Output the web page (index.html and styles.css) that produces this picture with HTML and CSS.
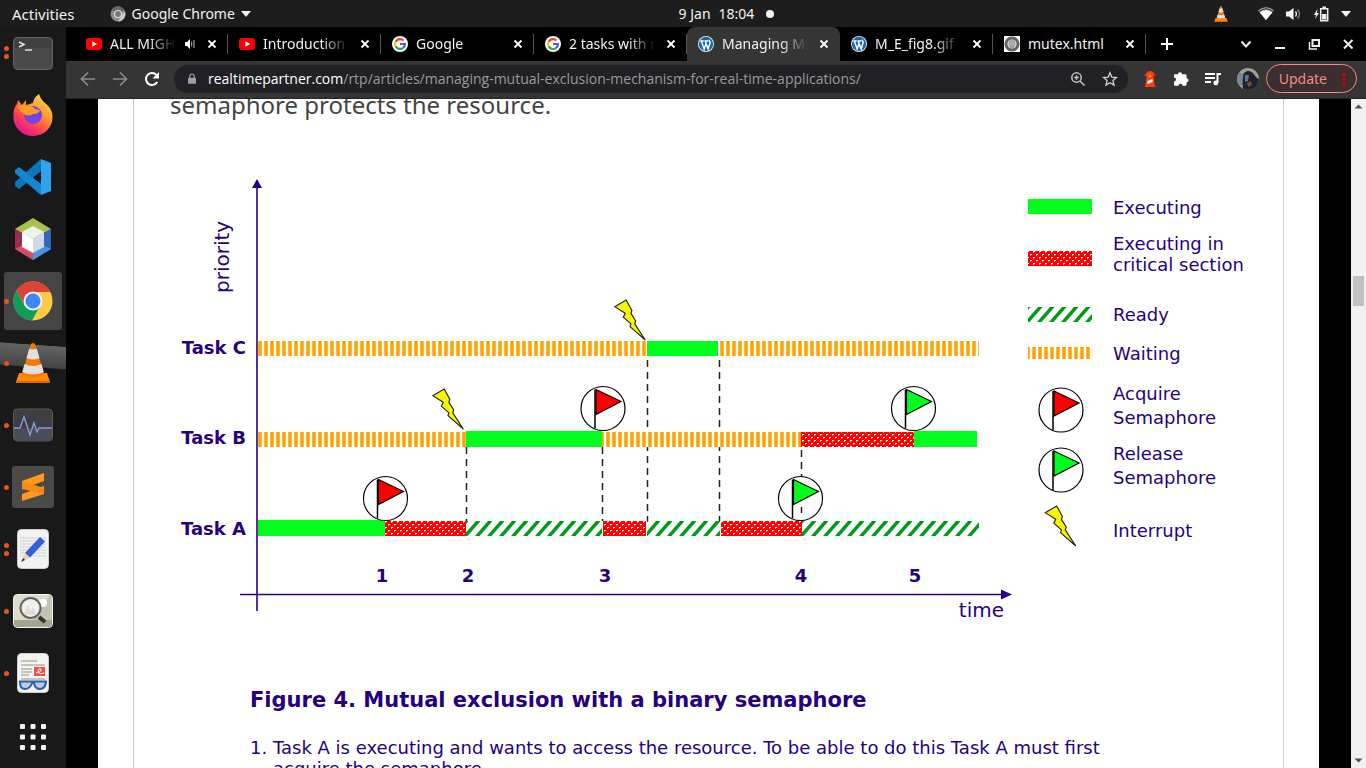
FILE: index.html
```html
<!DOCTYPE html>
<html lang="en">
<head>
<meta charset="utf-8">
<title>Managing Mutual Exclusion</title>
<link rel="stylesheet" href="styles.css">
</head>
<body>
<svg class="sprite" aria-hidden="true">
  <symbol id="youtube" viewBox="0 0 16 16"><rect x="0" y="2" width="16" height="12" rx="3" fill="#f00"/><path d="M6.3 5.3 11 8l-4.700 2.700z" fill="#fff"/></symbol>
  <symbol id="google" viewBox="0 0 16 16"><circle cx="8" cy="8" r="8" fill="#fff"/><g fill="none" stroke-width="2.200"><path d="M11.600 4.600A5 5 0 0 0 3.600 5.700" stroke="#ea4335"/><path d="M3.700 5.500a5 5 0 0 0 0 5" stroke="#fbbc05"/><path d="M3.600 10.400a5 5 0 0 0 7.700 1.300" stroke="#34a853"/><path d="M8 8h5a5 5 0 0 1-1.800 3.800" stroke="#4a5cf5"/></g></symbol>
  <symbol id="wordpress" viewBox="0 0 16 16"><circle cx="8" cy="8" r="8" fill="#e8f1f8"/><circle cx="8" cy="8" r="7.200" fill="#1769a8"/><path d="M2.300 5h3.400M6.500 5h3.700M3.300 5l2.900 8L8 7.500M7.200 5l2.900 8 2-6.200c.5-1.500-1.300-1.500-.8-3.200" fill="none" stroke="#fff" stroke-width="1.400"/></symbol>
  <symbol id="globe" viewBox="0 0 16 16"><path fill="#fff" d="M0 0h16v16H0z"/><circle cx="8" cy="8" r="7.500" fill="#444"/><circle cx="8" cy="8" r="4.800" fill="#ccc"/><path d="M8 3v10M6 4q-1 4 1 8M10 4q1 4-1 8" stroke="#888" fill="none"/><circle cx="8" cy="8" r="6.300" fill="none" stroke="#888" stroke-width="1"/></symbol>
  <symbol id="close" viewBox="0 0 16 16"><path d="m4.500 4.500 7 7m0-7-7 7" stroke="#fff" stroke-width="1.800"/></symbol>
  <symbol id="cone" viewBox="0 0 36 40"><path d="M4 30h28l3 9H1z" fill="#ff8a00"/><path d="M1 38h34v2H1z" fill="#e06a00"/><path d="M16 1q2-2 4 0l9 30q-11 6-22 0z" fill="#f57900"/><path d="m14.300 5.500-2.800 9.500q6.500 3 13 0l-2.800-9.500q-4 2-7.400 0zM9.500 21l-2.300 8q10.800 5 21.600 0l-2.300-8q-8.500 4-17 0z" fill="#e0e0e0"/></symbol>
</svg>

<header class="topbar">
  <div class="topbar-side">
    <button class="plain activities">Activities</button>
    <button class="plain app-menu">
      <svg width="16" height="16" viewBox="0 0 16 16"><circle cx="8" cy="8" r="7.500" fill="#8d8d8d"/><path d="M8 8 1.500 4A7.500 7.500 0 0 1 14.500 4z" fill="#666"/><path d="M8 15.500 12 8.500l3-3a7.500 7.500 0 0 1-7 10z" fill="#c9c9c9"/><circle cx="8" cy="8" r="3.500" fill="#777" stroke="#ddd" stroke-width="1.200"/></svg>
      <span>Google Chrome</span>
      <svg width="10" height="6" viewBox="0 0 10 6"><path d="M0 0h10L5 6z" fill="#f2f2f2"/></svg>
    </button>
  </div>
  <button class="plain clock"><span>9 Jan</span><span>18:04</span><i class="notice"></i></button>
  <div class="topbar-side status">
    <svg class="tray-cone" width="14" height="16"><use href="#cone"/></svg>
    <svg width="16" height="13" viewBox="0 0 16 13"><path d="M0 3.500Q8-3 16 3.500L8 13z" fill="#aaa"/><path d="M1.800 5.500Q8 1 14.200 5.500L8 13z" fill="#fff"/><path d="M.8 4.700Q8-1 15.200 4.700" stroke="#1d1d1d" fill="none"/></svg>
    <svg width="16" height="14" viewBox="0 0 16 14"><path d="M0 4.500h3L7.500 1v12L3 9.500H0z" fill="#fff"/><path d="M9.500 4.500q2 2.500 0 5" stroke="#eee" stroke-width="1.300" fill="none"/><path d="M11.500 2.500q4 4.500 0 9" stroke="#888" stroke-width="1.300" fill="none"/></svg>
    <svg width="15" height="16" viewBox="0 0 15 16"><path d="M3.500 3 0 9h2L1 13l4-6H3z" fill="#eee"/><path d="M6.700 2.700h7v12h-7zM8.500 1.300h3.500" fill="none" stroke="#eee" stroke-width="1.500"/><path d="M8 8h4.500v5.500H8z" fill="#eee"/></svg>
    <svg width="10" height="6" viewBox="0 0 10 6"><path d="M0 0h10L5 6z" fill="#f2f2f2"/></svg>
  </div>
</header>

<div class="desktop">
<nav class="dock" aria-label="Dock">
  <button class="dock-item" aria-label="Terminal"><span class="dots"><i></i><i></i></span>
    <svg width="40" height="34" viewBox="0 0 40 34"><rect x=".5" y="1.500" width="39" height="32" rx="4" fill="#4a4a4a" stroke="#636363"/><path d="M2 5q0-3 3-3h30q3 0 3 3v7H2z" fill="#404040"/><path d="m6 6 5 2.500L6 11M12 14h7" fill="none" stroke="#e0e0e0" stroke-width="1.600"/></svg></button>
  <button class="dock-item" aria-label="Firefox"><span class="dots"></span>
    <svg width="40" height="42" viewBox="0 0 40 42"><defs><linearGradient id="fx" x1="1" y1="0" x2=".3" y2="1"><stop offset="0" stop-color="#fff44f"/><stop offset=".4" stop-color="#ffa12e"/><stop offset=".7" stop-color="#ff4a4a"/><stop offset="1" stop-color="#e3109a"/></linearGradient></defs><path d="M20 9q1-6 6-9 2 6 6 9 8 6 7.500 15A19.500 18.500 0 0 1 .5 23Q0 14 4 10l1-4 4 5 4-5v5z" fill="url(#fx)"/><circle cx="20" cy="21" r="9" fill="#7542e5"/><path d="M4 13q6-4 12-1 4 0 6 3l5 1q-1 4-7 4-5 3-9 0-4-3-7-7z" fill="#ff9a25"/></svg></button>
  <button class="dock-item" aria-label="Visual Studio Code"><span class="dots"></span>
    <svg width="38" height="38" viewBox="0 0 38 38"><path d="M27 1 1 24v4l4 3 22-18z" fill="#0b76bd"/><path d="M5 9 1 12v3l26 22V26z" fill="#1288d3"/><path d="m27 1 10 4v28l-10 4z" fill="#2ea4f1"/></svg></button>
  <button class="dock-item" aria-label="NetBeans"><span class="dots"></span>
    <svg width="38" height="42" viewBox="0 0 38 42"><path d="M19 0 37 11 19 21 1 11z" fill="#a9c24e"/><path d="M1 11v20l18 11V21z" fill="#9c2c4b"/><path d="m1 31 18-9v20z" fill="#d84967"/><path d="M37 11v20L19 42V21z" fill="#2f68b8"/><path d="m37 31-18-9v20z" fill="#4c94df"/><path d="m19 8 11 6-11 7L8 14z" fill="#f0f3e4"/><path d="M8 14v15l11 6V21z" fill="#fff"/><path d="M30 14v15l-11 6V21z" fill="#d0dae4"/></svg></button>
  <button class="dock-item active" aria-label="Google Chrome"><span class="dots"><i></i></span>
    <svg width="40" height="40" viewBox="0 0 40 40"><circle cx="20" cy="20" r="19.500" fill="#ffc943"/><path d="M20 11h17.300A19.500 19.500 0 0 0 3.500 9.600L12 25z" fill="#db4437"/><path d="M3.500 9.600A19.500 19.500 0 0 0 19 39.500l8-14.500-15 0z" fill="#109d58"/><circle cx="20" cy="20" r="9.500" fill="#f1f1f1"/><circle cx="20" cy="20" r="7.500" fill="#4285f4"/></svg></button>
  <button class="dock-item focused" aria-label="VLC"><span class="dots"><i></i></span>
    <svg width="36" height="40"><use href="#cone"/></svg></button>
  <button class="dock-item" aria-label="System Monitor"><span class="dots"><i></i></span>
    <svg width="40" height="34" viewBox="0 0 40 34"><rect x=".5" y="1" width="39" height="32" rx="4" fill="#3d3f42" stroke="#5b5b5b"/><path d="M1 20h38v9q0 3-3 3H4q-3 0-3-3z" fill="#4b4e58"/><path d="M1 20h6l4-11 6 18 4-12 3 9 2-4h13" fill="none" stroke="#829bd8" stroke-width="1.400"/></svg></button>
  <button class="dock-item" aria-label="Sublime Text"><span class="dots"><i></i></span>
    <svg width="42" height="42" viewBox="0 0 42 42"><rect width="42" height="42" rx="3" fill="#4a4a4a"/><path d="m10 15 22-8v8l-22 8zM10 28l22-8v8l-22 7z" fill="#ff9a1f"/><path d="m10 15 22 7v6l-22-5z" fill="#f58d12"/></svg></button>
  <button class="dock-item" aria-label="Text Editor"><span class="dots"><i></i><i></i></span>
    <svg width="32" height="40" viewBox="0 0 32 40"><rect x=".5" y=".5" width="31" height="39" rx="4" fill="#f2f2f2" stroke="#ccc"/><path d="M3 9h26M3 12h26M3 15h26M3 18h26M3 21h26M3 24h26M3 27h26" stroke="#d0d0d0"/><path d="m23 8 5 4.500-15 16L8 24z" fill="#2d62dd"/><path d="m8 24 5 4.500-8 4z" fill="#f2cf9e"/><path d="m6 29-2 4 4-2z" fill="#333"/></svg></button>
  <button class="dock-item" aria-label="Image Viewer"><span class="dots"><i></i></span>
    <svg width="40" height="34" viewBox="0 0 40 34"><rect x=".5" y=".5" width="39" height="33" rx="4" fill="#dcdccb" stroke="#f5f5ee"/><path d="M1 26h38v4q0 3-3 3H4q-3 0-3-3z" fill="#a5a48f"/><path d="m20 26 17-25h2v25z" fill="#c4c3af"/><circle cx="30" cy="9" r="4" fill="#fff"/><circle cx="17.500" cy="14" r="10" fill="#eff0ec" stroke="#636363" stroke-width="2"/><path d="m11 20 4-9 3 6 2-4 4 8" fill="#ddddd5"/><path d="m26 23 6 5" stroke="#333" stroke-width="4"/></svg></button>
  <button class="dock-item" aria-label="Document Viewer"><span class="dots"><i></i></span>
    <svg width="32" height="40" viewBox="0 0 32 40"><rect x=".5" y=".5" width="31" height="39" rx="4" fill="#f3f3f1" stroke="#ccc"/><path d="M4 8h16M4 12h24M4 16h11M4 19h11M4 22h8M4 26h24" stroke="#b6b4a4" stroke-width="1.500"/><path d="M17 14h11v9H17z" fill="#ef5149"/><path d="M19 20q6-1 5-4-3-1-3 3 2 3 6 1" fill="none" stroke="#fff"/><path d="M2 28.500h28M3 29q0 7 5 7t7-6h2q1 6 6 6t6-7" fill="#b9cee5" stroke="#2464a8" stroke-width="2"/></svg></button>
  <button class="dock-item" aria-label="Show Applications"><span class="dots"></span>
    <svg width="28" height="28" viewBox="0 0 28 28" fill="#f2f2f2"><rect x="1" y="1" width="5" height="5" rx="1"/><rect x="11.500" y="1" width="5" height="5" rx="1"/><rect x="22" y="1" width="5" height="5" rx="1"/><rect x="1" y="11.500" width="5" height="5" rx="1"/><rect x="11.500" y="11.500" width="5" height="5" rx="1"/><rect x="22" y="11.500" width="5" height="5" rx="1"/><rect x="1" y="22" width="5" height="5" rx="1"/><rect x="11.500" y="22" width="5" height="5" rx="1"/><rect x="22" y="22" width="5" height="5" rx="1"/></svg></button>
</nav>

<main class="browser">
  <div class="tabstrip">
    <div class="tab"><svg width="16" height="16"><use href="#youtube"/></svg><span class="tab-title">ALL MIGHT</span><svg width="12" height="12" viewBox="0 0 12 12"><path d="M1 4h2l3-3v10L3 8H1z" fill="#fff"/><path d="M7.700 3.500v5M10 2v8" stroke="#bbb"/></svg><button class="plain" aria-label="Close tab"><svg width="16" height="16"><use href="#close"/></svg></button></div>
    <div class="tab"><svg width="16" height="16"><use href="#youtube"/></svg><span class="tab-title">Introduction</span><button class="plain" aria-label="Close tab"><svg width="16" height="16"><use href="#close"/></svg></button></div>
    <div class="tab"><svg width="16" height="16"><use href="#google"/></svg><span class="tab-title">Google</span><button class="plain" aria-label="Close tab"><svg width="16" height="16"><use href="#close"/></svg></button></div>
    <div class="tab"><svg width="16" height="16"><use href="#google"/></svg><span class="tab-title">2 tasks with mutex</span><button class="plain" aria-label="Close tab"><svg width="16" height="16"><use href="#close"/></svg></button></div>
    <div class="tab current"><svg width="16" height="16"><use href="#wordpress"/></svg><span class="tab-title">Managing Mutual</span><button class="plain" aria-label="Close tab"><svg width="16" height="16"><use href="#close"/></svg></button></div>
    <div class="tab"><svg width="16" height="16"><use href="#wordpress"/></svg><span class="tab-title">M_E_fig8.gif</span><button class="plain" aria-label="Close tab"><svg width="16" height="16"><use href="#close"/></svg></button></div>
    <div class="tab"><svg width="16" height="16"><use href="#globe"/></svg><span class="tab-title whole">mutex.html</span><button class="plain" aria-label="Close tab"><svg width="16" height="16"><use href="#close"/></svg></button></div>
    <button class="plain new-tab" aria-label="New tab"><svg width="14" height="14" viewBox="0 0 14 14"><path d="M7 1v12M1 7h12" stroke="#fff" stroke-width="2"/></svg></button>
    <div class="window-controls">
      <button class="plain" aria-label="Search tabs"><svg width="12" height="12" viewBox="0 0 12 12"><path d="m1.500 3.500 4.500 5 4.500-5" fill="none" stroke="#eee" stroke-width="2"/></svg></button>
      <button class="plain" aria-label="Minimise"><svg width="12" height="12" viewBox="0 0 12 12"><path d="M1 10h10" stroke="#eee" stroke-width="2"/></svg></button>
      <button class="plain" aria-label="Restore"><svg width="12" height="12" viewBox="0 0 12 12"><path d="M4.500 2h6.500v6H4.500z" fill="none" stroke="#eee" stroke-width="2"/><path d="M1.500 4v7H9" fill="none" stroke="#eee" stroke-width="1.500"/></svg></button>
      <button class="plain" aria-label="Close window"><svg width="12" height="12" viewBox="0 0 12 12"><path d="m2 2 8.500 8.500m0-8.500L2 10.500" stroke="#eee" stroke-width="2"/></svg></button>
    </div>
  </div>

  <div class="toolbar">
    <button class="plain nav" aria-label="Back"><svg width="16" height="16" viewBox="0 0 16 16"><path d="M15 8H2m6-6.500L1.500 8 8 14.500" fill="none" stroke="#8b8b8b" stroke-width="1.700"/></svg></button>
    <button class="plain nav" aria-label="Forward"><svg width="16" height="16" viewBox="0 0 16 16"><path d="M1 8h13M8 1.500 14.500 8 8 14.500" fill="none" stroke="#8b8b8b" stroke-width="1.700"/></svg></button>
    <button class="plain nav" aria-label="Reload"><svg width="16" height="16" viewBox="0 0 16 16"><path d="M13.200 11A6 6 0 1 1 12.500 4" fill="none" stroke="#fff" stroke-width="2"/><path d="M15 1v6.500H8.500z" fill="#fff"/></svg></button>
    <div class="omnibox">
      <svg width="8" height="12" viewBox="0 0 10 14"><path d="M1 5.500h8q1 0 1 1V12q0 1-1 1H1q-1 0-1-1V6.500q0-1 1-1z" fill="#9aa0a6"/><path d="M2.300 6V3.500a2.700 2.700 0 0 1 5.400 0V6" fill="none" stroke="#9aa0a6" stroke-width="1.400"/></svg>
      <a class="url" href="#"><b>realtimepartner.com</b>/rtp/articles/managing-mutual-exclusion-mechanism-for-real-time-applications/</a>
      <button class="plain" aria-label="Zoom"><svg width="16" height="16" viewBox="0 0 16 16"><circle cx="6.500" cy="6.500" r="4.700" fill="none" stroke="#c4c4c4" stroke-width="1.500"/><path d="m10 10 4.500 4.500M4.200 6.500h4.600M6.500 4.200v4.600" stroke="#c4c4c4" stroke-width="1.500"/></svg></button>
      <button class="plain" aria-label="Bookmark"><svg width="16" height="16" viewBox="0 0 16 16"><path d="m8 1.800 1.800 4.300 4.700.4-3.600 3 1.100 4.600L8 11.700l-4 2.400 1.100-4.600-3.600-3 4.700-.4z" fill="none" stroke="#d0d0d0" stroke-width="1.300"/></svg></button>
    </div>
    <div class="extensions">
      <svg width="16" height="16" viewBox="0 0 16 16"><path d="M4 3q0-3 4-3t4 3l-.5 3 1.500 10H3L4.500 6z" fill="#fb3d08"/><circle cx="8" cy="4.500" r="1.800" fill="#ffd84d"/><path d="M2.500 4h11" stroke="#fb3d08" stroke-width="1.500"/><path d="m5.500 10 5-2v3l-5 2z" fill="#fff"/></svg>
      <svg width="16" height="16" viewBox="0 0 16 16"><path d="M5 3.200a2 2 0 0 1 4 0h3.500q1 0 1 1v3a2 2 0 0 1 0 4v2.600q0 1-1 1H9.500a2 2 0 0 0-4 0H2q-1 0-1-1v-3.300a2 2 0 0 0 0-4V4.200q0-1 1-1z" fill="#fff"/></svg>
      <svg width="18" height="16" viewBox="0 0 18 16"><path d="M1 3h10M1 7h10M1 11h6" stroke="#fff" stroke-width="2"/><path d="M13.500 12V3H17" fill="none" stroke="#fff" stroke-width="2"/><circle cx="11.800" cy="12" r="2.400" fill="#fff"/></svg>
      <svg width="22" height="22" viewBox="0 0 22 22"><defs><clipPath id="av"><circle cx="11" cy="11" r="11"/></clipPath></defs><g clip-path="url(#av)"><path fill="#a19d91" d="M0 0h22v22H0z"/><path fill="#7a8799" d="M0 5h7v12H0z"/><path d="M6 22q-1-12 1-17 4-4 9 0 3 5 6 6v11z" fill="#1e222d"/><path d="M8 7h4l-1 6-3 1z" fill="#5a73a1"/><path d="m10 15 4-2 1 4-4 2z" fill="#7d4b32"/></g></svg>
    </div>
    <button class="update"><span>Update</span><svg width="4" height="14" viewBox="0 0 4 14" fill="#d80000"><path d="M.5 1h3v3h-3zM.5 5.700h3v3h-3zM.5 10.500h3v3h-3z"/></svg></button>
  </div>

  <div class="viewport">
    <div class="page">
      <article class="article">
        <p class="lead">semaphore protects the resource.</p>
        <figure>
          <svg class="chart" viewBox="170 140 1077 490" role="img" aria-label="Timeline of three tasks sharing a resource">
            <defs>
              <pattern id="waiting" x="258" width="6" height="20" patternUnits="userSpaceOnUse"><path d="M0 0h4v20H0z" fill="#ffd27a"/><path d="M.5 0h3v20h-3z" fill="#ffa200"/></pattern>
              <pattern id="ready" x="466" y="521" width="12" height="15" patternUnits="userSpaceOnUse"><path d="M-3 15 10 0h4.500L1.500 15zM9 15 22 0h4.500L13.500 15zM-15 15-2 0h4.500L-10.500 15z" fill="#009a17"/></pattern>
              <pattern id="critical" x="385" y="521" width="6" height="6" patternUnits="userSpaceOnUse"><path fill="#f00" d="M0 0h6v6H0z"/><path d="M0 0h2v1H0zM3 3h2v1H3z" fill="#fff"/><path d="M0 1h1v1H0zM3 4h1v1H3z" fill="#ff9090"/></pattern>
              <symbol id="bolt" viewBox="0 0 34 44" overflow="visible"><path d="M1 8 13 1l6 11-1 3 5 8-1 3 11 17-16-14 1-3-8-7 2-4z" fill="#f4f700" stroke="#222" stroke-width="1.200"/></symbol>
              <g id="ring"><circle r="22" fill="#fff" stroke="#000" stroke-width="1.200"/><path d="M-8-19v39" stroke="#000" stroke-width="1.500"/></g>
              <path id="pennant" d="M-7-19 18-7-7 6z" stroke="#000" stroke-width="1.200"/>
            </defs>
            <g stroke="#222" stroke-width="1.500" stroke-dasharray="7 5">
              <path d="M466.500 447v74M602.500 447v74M647.500 360v161M719.500 360v161M801.500 450v71"/>
            </g>
            <path fill="#fff" d="M258 431h720v16H258z"/>
            <g fill="url(#waiting)"><path d="M258 341h389v15H258zM718 341h261v15H718zM258 432h208v15H258zM602 432h199v15H602zM1028 347h64v12h-64z"/></g>
            <g fill="#00ff1c"><path d="M647 341h71v15h-71zM466 431h136v16H466zM914 431h63v16h-63zM258 520h127v16H258zM1028 199h64v15h-64z"/></g>
            <g fill="url(#critical)"><path d="M801 432h113v15H801zM385 521h81v15h-81zM603 521h43v15h-43zM721 521h81v15h-81zM1028 251h64v15h-64z"/></g>
            <path fill="url(#ready)" d="M466 521h136v15H466zM647 521h73v15h-73zM802 521h177v15H802z"/>
            <path fill="url(#ready)" d="M466 521h64v15h-64z" transform="translate(562 -214)"/>
            <g stroke="#27007f" stroke-width="1.600"><path d="M257 184v427M240 594.500h765"/></g>
            <path d="m257 179 5 9h-10zM1012 594.500l-11-5v10z" fill="#27007f"/>
            <use href="#bolt" x="431" y="388" width="34" height="42"/>
            <use href="#bolt" x="613" y="299" width="34" height="42"/>
            <use href="#bolt" x="1044" y="505" width="33" height="42"/>
            <use href="#ring" x="385.500" y="498.500"/><use href="#pennant" x="385.500" y="498.500" fill="#f00"/>
            <use href="#ring" x="603" y="408.500"/><use href="#pennant" x="603" y="408.500" fill="#f00"/>
            <use href="#ring" x="1061" y="410"/><use href="#pennant" x="1061" y="410" fill="#f00"/>
            <use href="#ring" x="913.500" y="408.500"/><use href="#pennant" x="913.500" y="408.500" fill="#00ff1c"/>
            <use href="#ring" x="800.500" y="498.500"/><use href="#pennant" x="800.500" y="498.500" fill="#00ff1c"/>
            <use href="#ring" x="1061" y="470"/><use href="#pennant" x="1061" y="470" fill="#00ff1c"/>
            <path d="M801.500 507v6" stroke="#222" stroke-width="1.500"/>
            <g class="label strong" text-anchor="end"><text x="246" y="354">Task C</text><text x="246" y="444">Task B</text><text x="246" y="535">Task A</text></g>
            <g class="label strong" text-anchor="middle"><text x="382" y="582">1</text><text x="468" y="582">2</text><text x="605" y="582">3</text><text x="801" y="582">4</text><text x="915" y="582">5</text></g>
            <g class="label axis"><text transform="translate(229 293) rotate(-90)">priority</text><text x="1004" y="617" text-anchor="end">time</text></g>
            <g class="label"><text x="1113" y="214">Executing</text><text x="1113" y="250">Executing in</text><text x="1113" y="271">critical section</text><text x="1113" y="321">Ready</text><text x="1113" y="360">Waiting</text><text x="1113" y="400">Acquire</text><text x="1113" y="424">Semaphore</text><text x="1113" y="460">Release</text><text x="1113" y="484">Semaphore</text><text x="1113" y="537">Interrupt</text></g>
          </svg>
          <figcaption>
            <h2>Figure 4. Mutual exclusion with a binary semaphore</h2>
            <ol><li>Task A is executing and wants to access the resource. To be able to do this Task A must first<br>acquire the semaphore.</li></ol>
          </figcaption>
        </figure>
      </article>
    </div>
    <div class="scrollbar" aria-hidden="true">
      <svg width="15" height="15" viewBox="0 0 15 15"><path d="m7.500 5.500 4 4h-8z" fill="#505050"/></svg>
      <div class="track"><div class="thumb"></div></div>
      <svg width="15" height="15" viewBox="0 0 15 15"><path d="m7.500 9.500 4-4h-8z" fill="#505050"/></svg>
    </div>
  </div>
</main>
</div>
</body>
</html>
```
FILE: styles.css
```css
* { box-sizing: border-box; }

body {
  margin: 0;
  height: 100vh;
  display: flex;
  flex-direction: column;
  overflow: hidden;
  background: #000;
  color: #f2f2f2;
  font: 14px/20px "Noto Sans", sans-serif;
}

svg { display: block; flex: none; }
.sprite { position: absolute; width: 0; height: 0; }

.plain {
  padding: 0;
  border: 0;
  background: none;
  color: inherit;
  font: inherit;
}

.topbar {
  display: flex;
  align-items: center;
  height: 27px;
  flex: none;
  padding: 0 15px 0 12px;
  background: #1d1d1d;
}
.topbar-side { flex: 1; display: flex; align-items: center; gap: 35px; }
.activities { font-size: 15px; }
.app-menu { display: flex; align-items: center; gap: 6px; }
.clock { display: flex; align-items: center; gap: 8px; padding-left: 90px; }
.notice { width: 8px; height: 8px; margin-left: 4px; border-radius: 50%; background: #f2f2f2; }
.status { justify-content: flex-end; gap: 12px; }
.tray-cone { margin-right: 18px; }

.desktop { flex: 1; display: flex; min-height: 0; }

.dock {
  width: 66px;
  flex: none;
  display: flex;
  flex-direction: column;
  background: #191919;
}
.dock-item {
  height: 62px;
  flex: none;
  display: grid;
  grid-template-columns: 12px 42px 12px;
  align-items: center;
  justify-items: center;
  padding: 0;
  border: 0;
  background: none;
}
.dock-item:first-child { height: 57px; padding-bottom: 6px; }
.dock-item:last-child { padding-top: 4px; }
.dock-item.active {
  height: 58px;
  margin: 2px 4px;
  grid-template-columns: 4px 50px 4px;
  border-radius: 3px;
  background: #454545;
}
.dock-item.focused { background: linear-gradient(184deg, #191919 22%, #636363 23%, #444 55%, #191919 57%); }
.dots { display: grid; gap: 3px; }
.dots i { width: 5px; height: 5px; border-radius: 50%; background: #e95420; }

.browser { flex: 1; min-width: 0; display: flex; flex-direction: column; }

.tabstrip { height: 34px; flex: none; display: flex; padding-left: 9px; }
.tab {
  flex: 0 1 153px;
  min-width: 0;
  display: flex;
  align-items: center;
  gap: 8px;
  padding: 0 8px 0 11px;
  background: linear-gradient(#555, #555) right center / 1px 20px no-repeat;
}
.tab.current { background: #353535; border-radius: 8px 8px 0 0; }
.tab-title {
  flex: 1;
  min-width: 0;
  overflow: hidden;
  white-space: nowrap;
  mask-image: linear-gradient(90deg, #000 calc(100% - 28px), transparent);
}
.tab-title.whole { mask-image: none; }
.new-tab { margin-left: 14px; }
.window-controls { margin-left: auto; display: flex; align-items: center; gap: 22px; padding-right: 12px; }

.toolbar {
  height: 38px;
  flex: none;
  display: flex;
  align-items: center;
  padding: 0 9px 2px 14px;
  background: #353535;
  border-bottom: 1px solid #222;
}
.nav { margin-right: 16px; }
.omnibox {
  flex: 1;
  min-width: 0;
  height: 28px;
  display: flex;
  align-items: center;
  gap: 16px;
  margin-left: -2px;
  padding: 0 10px 0 14px;
  border-radius: 14px;
  background: #202026;
}
.url {
  flex: 1;
  min-width: 0;
  margin-left: -4px;
  overflow: hidden;
  white-space: nowrap;
  font-family: "Open Sans", sans-serif;
  color: #9a9a9a;
  text-decoration: none;
}
.url b { color: #fff; font-weight: 400; }
.extensions { display: flex; align-items: center; gap: 15px; margin: 0 7px 0 14px; }
.update {
  display: flex;
  align-items: center;
  gap: 15px;
  height: 29px;
  padding: 0 10px 0 12px;
  border: 1px solid #f28b82;
  border-radius: 15px;
  background: #3c2d2f;
  color: #f28b82;
  font: inherit;
}

.viewport { flex: 1; min-height: 0; display: flex; }
.page { flex: 1; min-width: 0; margin: 0 32px; padding: 0 35px; overflow: hidden; background: #fff; }
.article {
  padding: 0 36px;
  border: solid #ccc;
  border-width: 0 1px;
  font-family: "DejaVu Sans", sans-serif;
  color: #27007f;
}
.lead {
  margin: -12px 0 17px;
  font: 24px/36px "Noto Sans", sans-serif;
  color: #444;
}
figure { margin: 0; }
.chart { width: 100%; height: auto; }
.label { font-size: 18px; fill: #27007f; }
.label.strong { font-weight: 700; }
.label.axis { font-size: 20px; }
figcaption { padding: 56px 0 0 80px; }
h2 { margin: 0 0 23px; font-size: 21px; line-height: 28px; white-space: nowrap; }
ol { margin: 0; padding-left: 23px; font-size: 18px; line-height: 21px; white-space: nowrap; }

.scrollbar { width: 15px; flex: none; display: flex; flex-direction: column; background: #f1f1f1; }
.track { flex: 1; padding: 162px 2px 0; }
.thumb { height: 30px; background: #c1c1c1; }
```
